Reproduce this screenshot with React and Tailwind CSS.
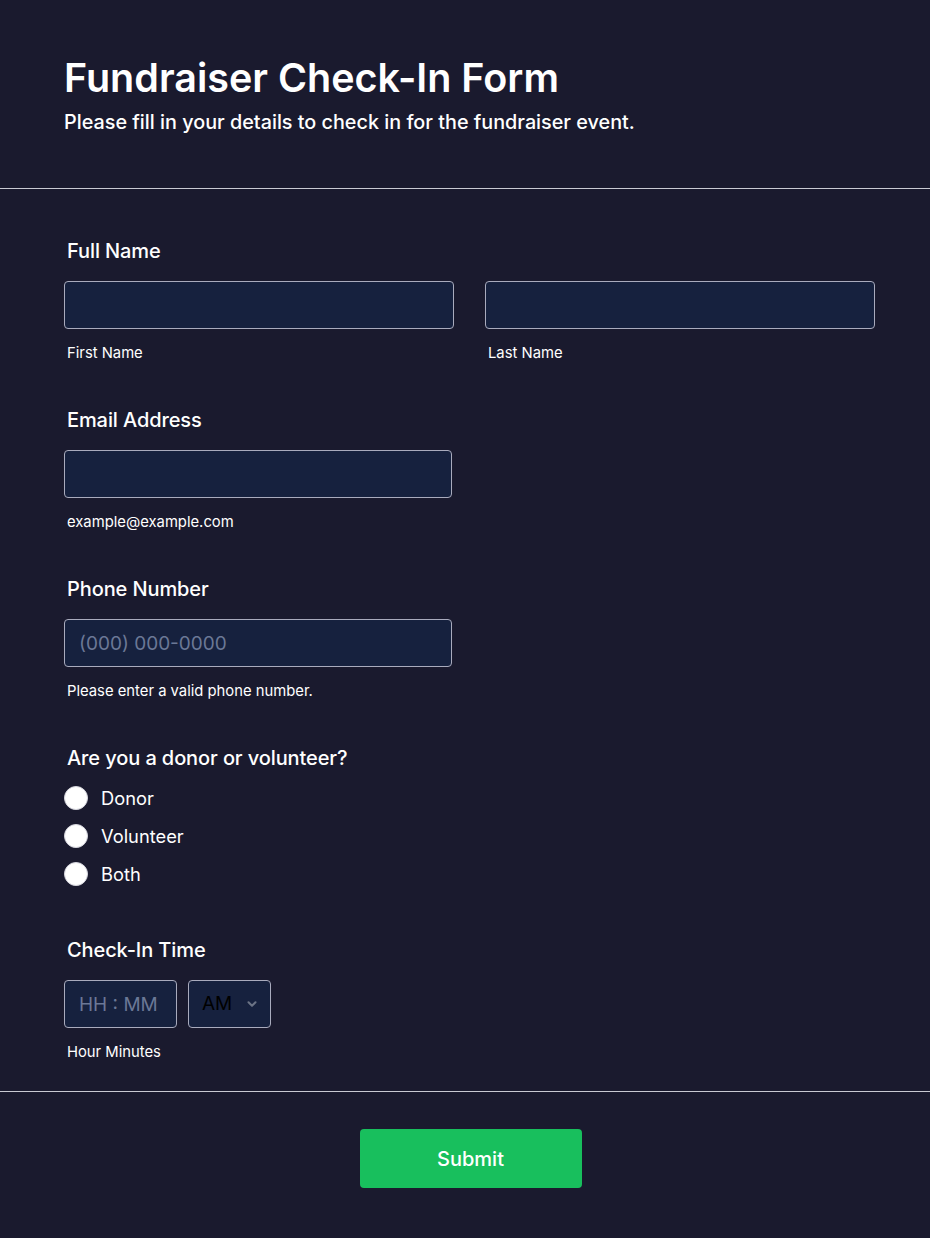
const fieldInput =
  "h-12 rounded-[4px] border border-[#a9abbd] bg-[#16213e] px-[14px] text-[19px] text-white outline-none placeholder:text-[#6b7896]";

function Section({ label, children, helper }) {
  return (
    <div className="flex flex-col">
      <label className="pl-[3px] text-[20px] font-medium leading-6 tracking-[-0.1px] text-white">{label}</label>
      <div className="mt-[18px]">{children}</div>
      {helper && <p className="mt-[14px] pl-[3px] text-[14.8px] leading-5 text-white">{helper}</p>}
    </div>
  );
}

export default function App() {
  const options = ["Donor", "Volunteer", "Both"];

  return (
    <div className="min-h-[1238px] w-full bg-[#1a1a2e] font-['Inter',sans-serif] text-white">
      <header className="border-b border-[#c9cad3] px-16 pb-[54px] pt-[54px]">
        <h1 className="text-[39.5px] font-semibold leading-[48px]">Fundraiser Check-In Form</h1>
        <p className="mt-2 text-[19.8px] font-medium leading-6">
          Please fill in your details to check in for the fundraiser event.
        </p>
      </header>

      <div className="border-b border-[#c9cad3]">
        <form className="flex w-[875px] flex-col gap-[45px] pb-[29px] pl-16 pt-[50px]">
          <Section label="Full Name">
            <div className="grid grid-cols-2 gap-[31px]">
              <div className="flex flex-col">
                <input className={fieldInput} />
                <span className="mt-[14px] pl-[3px] text-[14.8px] leading-5">First Name</span>
              </div>
              <div className="flex flex-col">
                <input className={fieldInput} />
                <span className="mt-[14px] pl-[3px] text-[14.8px] leading-5">Last Name</span>
              </div>
            </div>
          </Section>

          <Section label="Email Address" helper="example@example.com">
            <input className={`${fieldInput} w-[388px]`} />
          </Section>

          <Section label="Phone Number" helper="Please enter a valid phone number.">
            <input className={`${fieldInput} w-[388px]`} placeholder="(000) 000-0000" />
          </Section>

          <div className="flex flex-col">
            <span className="pl-[3px] text-[20px] font-medium leading-6 tracking-[-0.1px]">Are you a donor or volunteer?</span>
            <div className="mt-[9px] flex flex-col">
              {options.map((opt) => (
                <label key={opt} className="flex h-[38px] items-center gap-[13px]">
                  <span className="h-6 w-6 rounded-full border border-[#d6d6de] bg-white" />
                  <span className="text-[18.3px] leading-6">{opt}</span>
                </label>
              ))}
            </div>
          </div>

          <Section label="Check-In Time" helper="Hour Minutes">
            <div className="flex gap-[11px]">
              <input className={`${fieldInput} w-[113px] px-[13px]`} placeholder="HH : MM" />
              <div className="flex h-12 w-[83px] items-center justify-between rounded-[4px] border border-[#a9abbd] bg-[#16213e] pl-[13px] pr-[11px]">
                <span className="text-[19px] text-black">AM</span>
                <svg width="14" height="14" viewBox="0 0 24 24" fill="none" stroke="#6b7385" strokeWidth="3.5" strokeLinecap="round" strokeLinejoin="round">
                  <path d="M6 9l6 6 6-6" />
                </svg>
              </div>
            </div>
          </Section>
        </form>
      </div>

      <div className="flex justify-center pb-[50px] pt-[37px]">
        <button className="ml-[11px] h-[59px] w-[222px] rounded-[4px] bg-[#18bf5d] text-[20px] font-medium text-white">
          Submit
        </button>
      </div>
    </div>
  );
}
